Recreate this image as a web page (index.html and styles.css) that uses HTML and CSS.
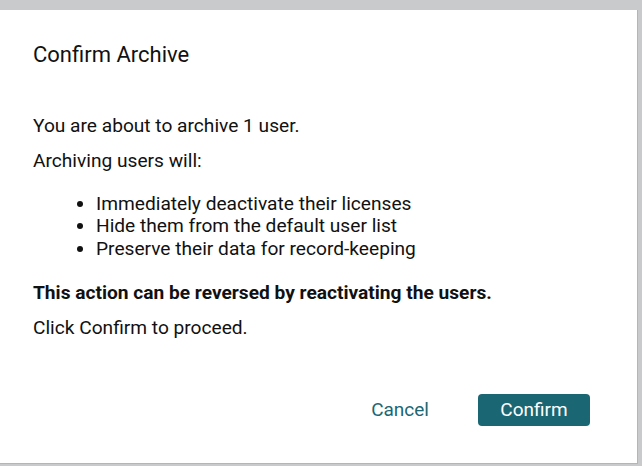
FILE: index.html
```html
<!DOCTYPE html>
<html>
<head>
<meta charset="utf-8">
<link rel="stylesheet" href="styles.css">
</head>
<body>
<div class="dialog">
  <h2 class="title">Confirm Archive</h2>
  <div class="content">
    <p>You are about to archive 1 user.</p>
    <p>Archiving users will:</p>
    <ul class="effects">
      <li>Immediately deactivate their licenses</li>
      <li>Hide them from the default user list</li>
      <li>Preserve their data for record-keeping</li>
    </ul>
    <p class="strong">This action can be reversed by reactivating the users.</p>
    <p>Click Confirm to proceed.</p>
  </div>
  <div class="actions">
    <button class="btn btn-text">Cancel</button>
    <button class="btn btn-primary">Confirm</button>
  </div>
</div>
</body>
</html>
```
FILE: styles.css
```css
html, body {
  margin: 0;
  padding: 0;
  height: 100%;
}
body {
  background: #c9cacb;
  font-family: Roboto, "Liberation Sans", sans-serif;
  color: #111111;
  padding-top: 10px;
  box-sizing: border-box;
  overflow: hidden;
}
.dialog {
  width: 638px;
  height: 454px;
  box-sizing: border-box;
  background: #ffffff;
  border-right: 1px solid #aab9bc;
  border-bottom: 1px solid #aab9bc;
  padding: 29px 0 0 33px;
  display: flex;
  flex-direction: column;
}
.title {
  margin: 0;
  font-size: 22px;
  font-weight: 400;
  line-height: 32px;
}
.content {
  margin-top: 43.75px;
  font-size: 19.15px;
  line-height: 22.5px;
}
.content p {
  margin: 0 0 12.5px;
}
.content .strong {
  font-weight: 700;
}
.effects {
  margin: 20.5px 0 21.5px;
  padding-left: 63px;
}
.actions {
  margin-top: 42px;
  display: flex;
  justify-content: flex-end;
  gap: 29px;
  padding-right: 47px;
}
.btn {
  font-family: Roboto, "Liberation Sans", sans-serif;
  font-size: 19px;
  height: 32px;
  padding: 0 20px;
  border: none;
  border-radius: 4px;
  cursor: pointer;
}
.btn-text {
  background: transparent;
  color: #1c6673;
}
.btn-primary {
  background: #1b6673;
  color: #ffffff;
  width: 112px;
}
```
